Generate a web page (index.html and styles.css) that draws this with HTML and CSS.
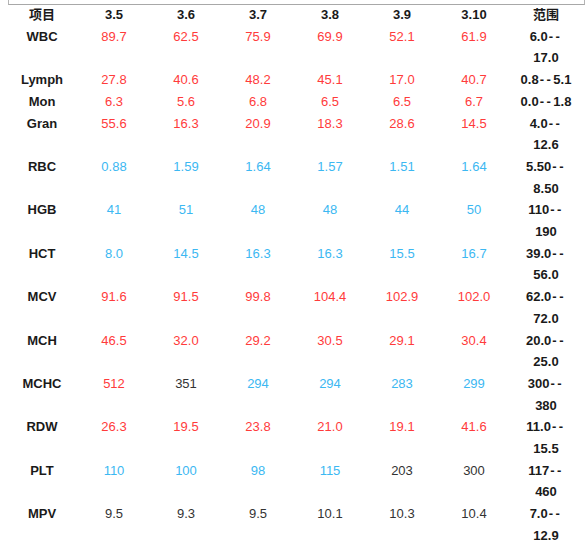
FILE: index.html
```html
<!DOCTYPE html>
<html lang="zh">
<head>
  <meta charset="UTF-8" />
  <title>血常规</title>
  <link rel="stylesheet" href="styles.css">
</head>
<body>
  <div class="sheet-edge"></div>
  <table class="blood-table">
    <thead>
      <tr>
        <th>项目</th><th>3.5</th><th>3.6</th><th>3.7</th><th>3.8</th><th>3.9</th><th>3.10</th><th>范围</th>
      </tr>
    </thead>
    <tbody>
      <tr>
        <th>WBC</th>
        <td class="hi">89.7</td><td class="hi">62.5</td><td class="hi">75.9</td><td class="hi">69.9</td><td class="hi">52.1</td><td class="hi">61.9</td>
        <td class="range">6.0<span class="sep">--</span><br>17.0</td>
      </tr>
      <tr>
        <th>Lymph</th>
        <td class="hi">27.8</td><td class="hi">40.6</td><td class="hi">48.2</td><td class="hi">45.1</td><td class="hi">17.0</td><td class="hi">40.7</td>
        <td class="range">0.8<span class="sep">--</span>5.1</td>
      </tr>
      <tr>
        <th>Mon</th>
        <td class="hi">6.3</td><td class="hi">5.6</td><td class="hi">6.8</td><td class="hi">6.5</td><td class="hi">6.5</td><td class="hi">6.7</td>
        <td class="range">0.0<span class="sep">--</span>1.8</td>
      </tr>
      <tr>
        <th>Gran</th>
        <td class="hi">55.6</td><td class="hi">16.3</td><td class="hi">20.9</td><td class="hi">18.3</td><td class="hi">28.6</td><td class="hi">14.5</td>
        <td class="range">4.0<span class="sep">--</span><br>12.6</td>
      </tr>
      <tr>
        <th>RBC</th>
        <td class="lo">0.88</td><td class="lo">1.59</td><td class="lo">1.64</td><td class="lo">1.57</td><td class="lo">1.51</td><td class="lo">1.64</td>
        <td class="range">5.50<span class="sep">--</span><br>8.50</td>
      </tr>
      <tr>
        <th>HGB</th>
        <td class="lo">41</td><td class="lo">51</td><td class="lo">48</td><td class="lo">48</td><td class="lo">44</td><td class="lo">50</td>
        <td class="range">110<span class="sep">--</span><br>190</td>
      </tr>
      <tr>
        <th>HCT</th>
        <td class="lo">8.0</td><td class="lo">14.5</td><td class="lo">16.3</td><td class="lo">16.3</td><td class="lo">15.5</td><td class="lo">16.7</td>
        <td class="range">39.0<span class="sep">--</span><br>56.0</td>
      </tr>
      <tr>
        <th>MCV</th>
        <td class="hi">91.6</td><td class="hi">91.5</td><td class="hi">99.8</td><td class="hi">104.4</td><td class="hi">102.9</td><td class="hi">102.0</td>
        <td class="range">62.0<span class="sep">--</span><br>72.0</td>
      </tr>
      <tr>
        <th>MCH</th>
        <td class="hi">46.5</td><td class="hi">32.0</td><td class="hi">29.2</td><td class="hi">30.5</td><td class="hi">29.1</td><td class="hi">30.4</td>
        <td class="range">20.0<span class="sep">--</span><br>25.0</td>
      </tr>
      <tr>
        <th>MCHC</th>
        <td class="hi">512</td><td class="ok">351</td><td class="lo">294</td><td class="lo">294</td><td class="lo">283</td><td class="lo">299</td>
        <td class="range">300<span class="sep">--</span><br>380</td>
      </tr>
      <tr>
        <th>RDW</th>
        <td class="hi">26.3</td><td class="hi">19.5</td><td class="hi">23.8</td><td class="hi">21.0</td><td class="hi">19.1</td><td class="hi">41.6</td>
        <td class="range">11.0<span class="sep">--</span><br>15.5</td>
      </tr>
      <tr>
        <th>PLT</th>
        <td class="lo">110</td><td class="lo">100</td><td class="lo">98</td><td class="lo">115</td><td class="ok">203</td><td class="ok">300</td>
        <td class="range">117<span class="sep">--</span><br>460</td>
      </tr>
      <tr>
        <th>MPV</th>
        <td class="ok">9.5</td><td class="ok">9.3</td><td class="ok">9.5</td><td class="ok">10.1</td><td class="ok">10.3</td><td class="ok">10.4</td>
        <td class="range">7.0<span class="sep">--</span><br>12.9</td>
      </tr>
    </tbody>
  </table>
</body>
</html>
```

FILE: styles.css
```css
body {
  margin: 0;
  background: #fff;
  font-family: "Liberation Sans", Arial, "Noto Sans CJK SC", sans-serif;
  font-size: 13px;
  color: #1f1f1f;
}

/* cropped spreadsheet edge along the top */
.sheet-edge {
  height: 4px;
  margin-left: 8px;
  width: 575px;
  border-left: 1px solid #b5b5b5;
  border-right: 1px solid #b5b5b5;
  border-bottom: 1px solid #a8a8a8;
}

.blood-table {
  border-collapse: collapse;
  table-layout: fixed;
  width: 576px;
  margin-left: 6px;
  margin-top: -1px;
}

.blood-table th,
.blood-table td {
  width: 72px;
  padding: 0;
  line-height: 21.7px;
  text-align: center;
  vertical-align: top;
}

.blood-table th {
  font-weight: bold;
  color: #1a1a1a;
}

.blood-table .range {
  font-weight: bold;
  color: #1a1a1a;
}

/* the double dash in ranges is drawn a little spaced out */
.sep {
  letter-spacing: 2.5px;
  margin-left: 1px;
}

.hi { color: #ff3b3b; }
.lo { color: #3cb8f2; }
.ok { color: #333; }
```
